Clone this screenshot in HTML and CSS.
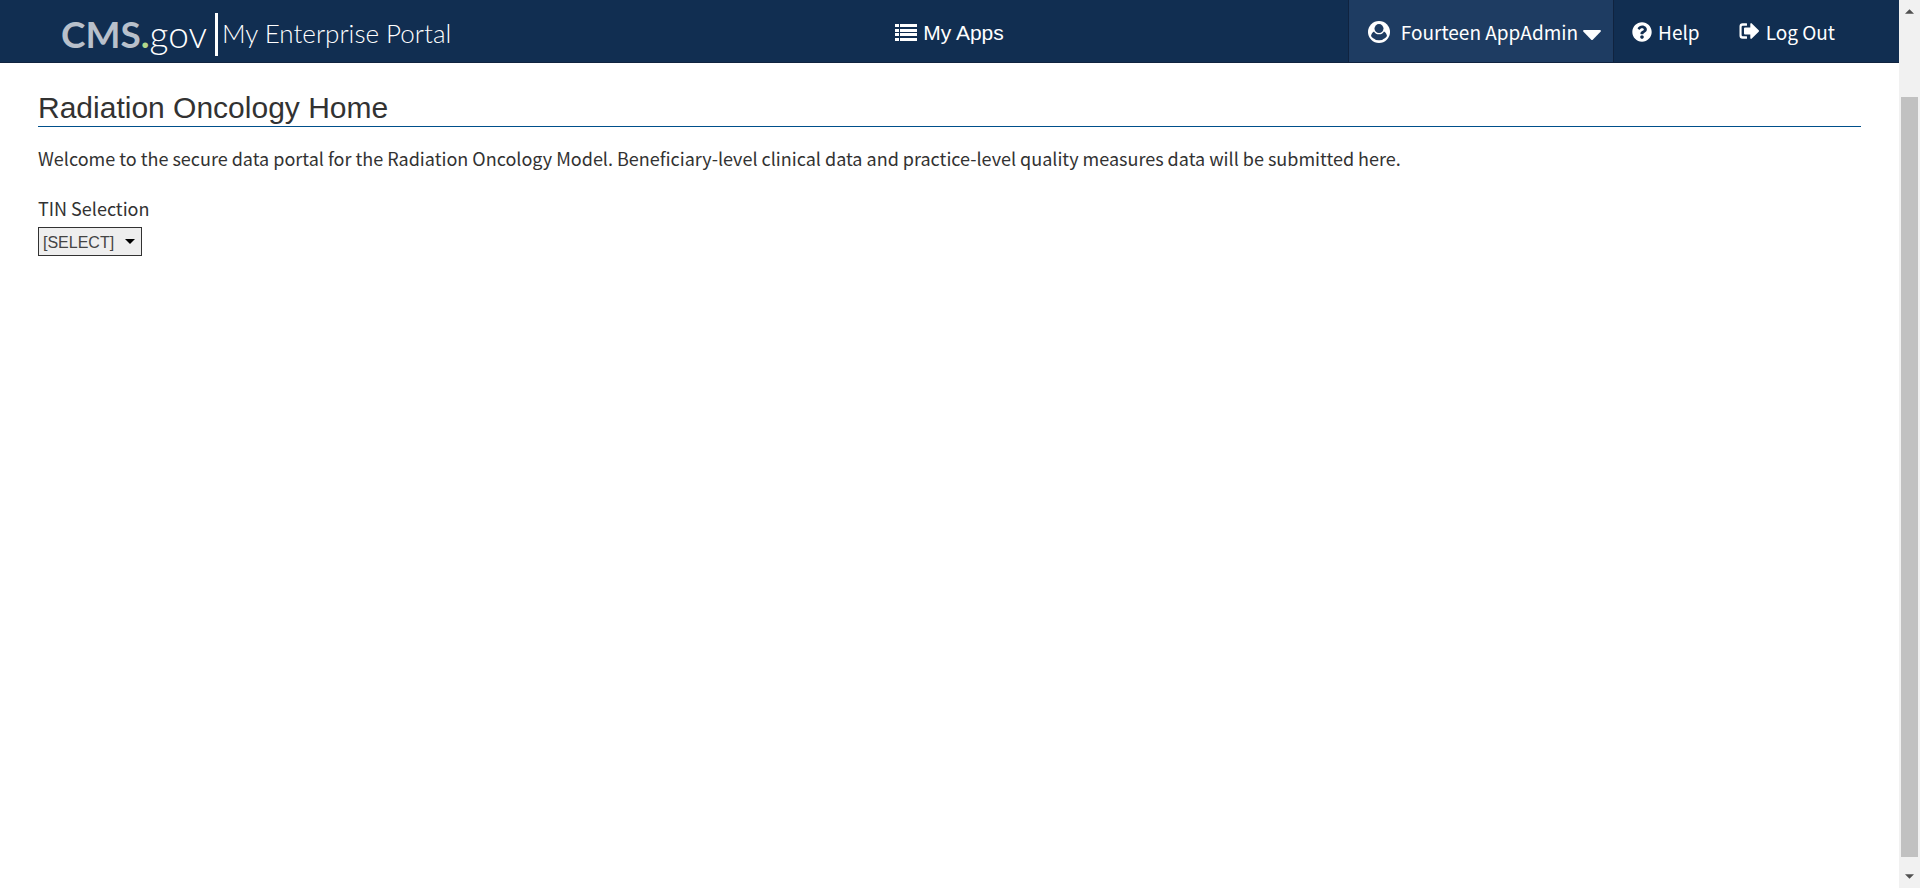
FILE: index.html
```html
<!DOCTYPE html>
<html lang="en">
<head>
<meta charset="utf-8">
<title>Radiation Oncology Home</title>
<meta name="viewport" content="width=device-width, initial-scale=1">
<link rel="stylesheet" href="styles.css">
</head>
<body>
<div class="page">
  <header class="topbar">
    <a class="brand" href="#">
      <span class="brand-name"><span class="brand-cms">CMS</span><span class="brand-dot">.</span><span class="brand-gov">gov</span></span>
      <span class="brand-bar"></span>
      <span class="brand-portal">My Enterprise Portal</span>
    </a>
    <button class="apps" type="button">
      <svg class="apps-icon" viewBox="0 0 22 17" aria-hidden="true">
        <path d="M0 0h4v3H0zM5 0h17v3H5zM0 5h4v3H0zM5 5h17v3H5zM0 9h4v3H0zM5 9h17v3H5zM0 14h4v3H0zM5 14h17v3H5z"/>
      </svg>
      <span>My Apps</span>
    </button>
    <nav class="links">
      <button class="account" type="button">
        <svg class="account-icon" viewBox="0 0 22 22" aria-hidden="true">
          <circle cx="11" cy="11" r="11"/>
          <circle class="account-cut" cx="11" cy="7.600" r="4.500"/>
          <path class="account-cut" d="M6 10.400c-1.600.7-2.600 2.300-3 4.500a9 9 0 0 0 2.200 2.300h11.600a9 9 0 0 0 2.200-2.300c-.4-2.200-1.400-3.800-3-4.500a5.700 5.700 0 0 1-10 0z"/>
          <path class="account-cut" d="M4.500 16.500a8.800 8.800 0 0 0 13 0z"/>
        </svg>
        <span>Fourteen AppAdmin</span>
        <svg class="account-caret" viewBox="0 0 18 10" aria-hidden="true"><path d="M1 0h16q1.500.5.5 1.800L10 9.400q-1 1-2 0L.5 1.800Q-.5.500 1 0z"/></svg>
      </button>
      <a class="link" href="#">
        <svg class="help-icon" viewBox="0 0 512 512" aria-hidden="true"><path d="M504 256c0 137-111 248-248 248S8 393 8 256C8 119.100 119 8 256 8s248 111.100 248 248zM262.700 90c-54.500 0-89.300 23-116.500 63.800-3.500 5.300-2.400 12.400 2.700 16.300l34.700 26.300c5.200 3.900 12.600 3 16.700-2.100 17.900-22.700 30.100-35.800 57.300-35.800 20.400 0 45.700 13.100 45.700 33 0 15-12.400 22.700-32.500 34C247.100 238.500 216 255 216 296v4c0 6.600 5.400 12 12 12h56c6.600 0 12-5.400 12-12v-1.300c0-28.700 84-29.900 84-107.700 0-58.500-60.700-101-117.300-101zM256 338c-25.400 0-46 20.600-46 46s20.600 46 46 46 46-20.600 46-46-20.600-46-46-46z"/></svg>
        <span>Help</span>
      </a>
      <a class="link link-logout" href="#">
        <svg class="logout-icon" viewBox="0 0 20 17" aria-hidden="true"><path d="M8 2.200V.800Q8 .300 7.500.300H3.500Q.500.300.500 3.300v9.400q0 3 3 3h4q.5 0 .5-.5v-1.400q0-.5-.5-.5H3.800q-1.200 0-1.200-1.200V3.900q0-1.200 1.200-1.200h3.700Q8 2.700 8 2.200zM19.700 7.300L12.800.400q-1.100-.9-1.500.500V4.500H6q-1 0-1 1v5q0 1 1 1h5.300v3.600q.4 1.400 1.500.5l6.900-6.900q.6-.7 0-1.400z"/></svg>
        <span>Log Out</span>
      </a>
    </nav>
  </header>
  <main class="content">
    <h1 class="title">Radiation Oncology Home</h1>
    <p class="intro">Welcome to the secure data portal for the Radiation Oncology Model. Beneficiary-level clinical data and practice-level quality measures data will be submitted here.</p>
    <label class="field-label" for="tin">TIN Selection</label>
    <div class="select-wrap">
      <select class="select" id="tin"><option>[SELECT]</option></select>
      <svg class="select-caret" viewBox="0 0 10 5" aria-hidden="true"><path d="M0 0h10L5 5z"/></svg>
    </div>
  </main>
</div>
<div class="scrollbar" aria-hidden="true">
  <svg class="scroll-arrow" viewBox="0 0 10 5"><path d="M0 5h10L5 0z"/></svg>
  <div class="scroll-track"><div class="scroll-thumb"></div></div>
  <svg class="scroll-arrow" viewBox="0 0 10 5"><path d="M0 0h10L5 5z"/></svg>
</div>
</body>
</html>
```
FILE: styles.css
```css
* { box-sizing: border-box; }
body {
  margin: 0;
  min-height: 100vh;
  display: grid;
  grid-template-columns: minmax(0, 1fr) 21px;
  background: #fff;
  color: #323232;
  font-family: "Noto Sans CJK SC", "Open Sans", sans-serif;
  font-size: 18px;
  line-height: 28px;
}
button, select { font: inherit; color: inherit; }
svg { display: block; flex: none; }
.topbar {
  display: grid;
  grid-template-columns: 1fr auto 1fr;
  height: 63px;
  background: #112e51;
  border-bottom: 1px solid #10233f;
  color: #fff;
}
.topbar svg { fill: currentColor; }
.brand {
  display: flex;
  align-items: center;
  padding-left: 61px;
  color: #fff;
  font-family: Lato, sans-serif;
  text-decoration: none;
  white-space: nowrap;
}
.brand-name { font-size: 37px; line-height: 40px; padding-top: 6px; }
.brand-cms { color: #b8c0cb; font-weight: 700; }
.brand-dot { color: #b3d88c; font-weight: 700; }
.brand-gov { font-weight: 300; }
.brand-bar { width: 3px; height: 43px; margin: 7px 4px 0 8px; background: #fff; }
.brand-portal { font-size: 26px; font-weight: 300; padding-top: 4px; }
.apps {
  display: flex;
  align-items: center;
  gap: 6px;
  padding: 3px 0 0;
  border: 0;
  background: none;
  font-family: "Liberation Sans", Arial, sans-serif;
  font-size: 21px;
}
.apps-icon { width: 22px; height: 17px; }
.links { display: flex; justify-content: flex-end; padding-right: 44px; font-size: 19px; white-space: nowrap; }
.account {
  display: flex;
  align-items: center;
  padding: 1px 12px 0 19px;
  border: solid #10233f;
  border-width: 0 1px;
  background: #1e3c62;
}
.account-icon { width: 22px; height: 22px; margin-right: 11px; }
.account-icon .account-cut { fill: #1e3c62; }
.account-caret { width: 18px; height: 10px; margin: 7px 0 0 5px; }
.link {
  display: flex;
  align-items: center;
  gap: 6px;
  padding: 1px 20px 0 18px;
  color: #fff;
  text-decoration: none;
}
.link-logout { gap: 7px; padding-left: 19px; }
.help-icon { width: 20px; height: 20px; }
.logout-icon { width: 20px; height: 17px; }
.content { padding: 26px 38px; }
.title {
  margin: 0 0 17px;
  border-bottom: 1px solid #004f8b;
  font-family: "Liberation Sans", Arial, sans-serif;
  font-size: 30px;
  font-weight: 400;
  line-height: 37px;
}
.intro { margin: 0 0 22px; }
.field-label { display: block; margin-bottom: 4px; }
.select-wrap { position: relative; display: inline-block; }
.select {
  display: block;
  appearance: none;
  height: 29px;
  padding: 1px 26px 0 4px;
  border: 1px solid #323232;
  border-radius: 0;
  background: #eee;
  color: #444;
  font-family: "Liberation Sans", Arial, sans-serif;
  font-size: 16px;
}
.select-caret { position: absolute; right: 7px; top: 12px; width: 10px; height: 5px; pointer-events: none; }
.scrollbar {
  display: flex;
  flex-direction: column;
  align-items: center;
  gap: 5px;
  padding: 9px 0;
  background: #f1f1f1;
}
.scroll-arrow { width: 9px; height: 5px; fill: #505050; }
.scroll-track { flex: 1; width: 17px; padding: 78px 0 12px; }
.scroll-thumb { height: 100%; background: #c1c1c1; }
```
